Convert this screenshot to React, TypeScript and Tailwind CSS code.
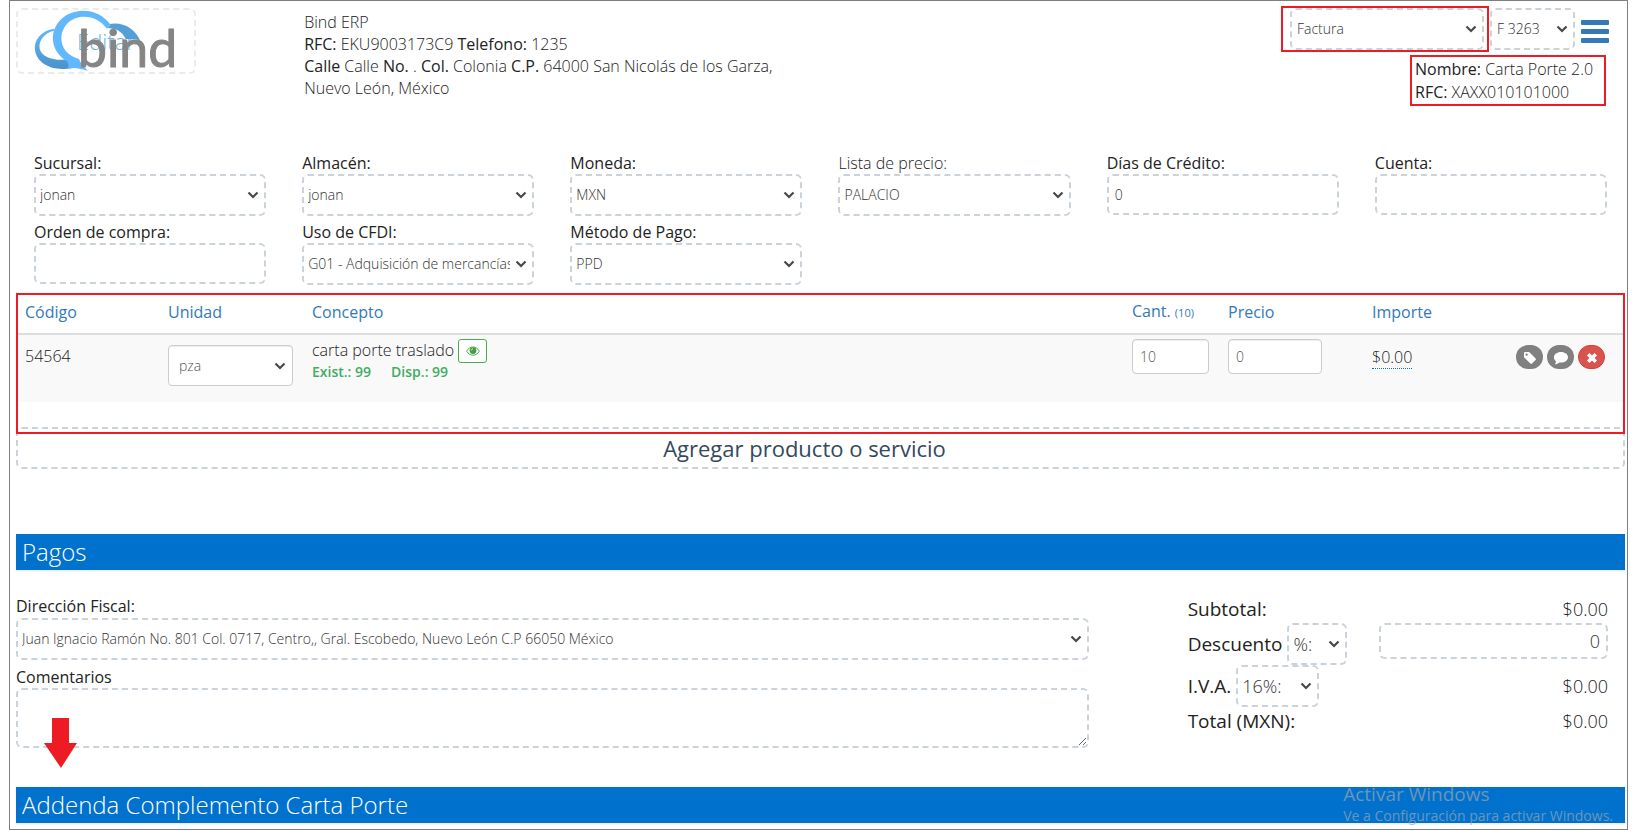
import { useId } from 'react';
import type { ReactNode } from 'react';

const dashed =
  'block rounded-md border-2 border-dashed border-[#cbd3da] bg-transparent font-light text-[#333]';

const boxed =
  'block rounded border border-[#ccc] bg-white font-light text-sm text-[#555] shadow-[inset_0_1px_1px_rgba(0,0,0,0.075)]';

function Select({ id, label, value, className }: { id?: string; label?: string; value: string; className: string }) {
  return (
    <div className="relative">
      <select id={id} aria-label={label} className={`${className} appearance-none overflow-hidden pr-[22px]`}>
        <option>{value}</option>
      </select>
      <svg
        aria-hidden
        viewBox="0 0 12 8"
        className="pointer-events-none absolute inset-y-0 right-[7px] my-auto h-2 w-3"
      >
        <path d="M1.500 1.500L6 6L10.500 1.500" fill="none" stroke="#484848" strokeWidth="2.200" />
      </svg>
    </div>
  );
}

function Field({ label, light, children }: { label: string; light?: boolean; children: (id: string) => ReactNode }) {
  const id = useId();

  return (
    <div className="px-[18px]">
      <label
        htmlFor={id}
        className={light ? 'block leading-[22px] font-light' : 'block leading-[22px]'}
      >
        {label}
      </label>
      {children(id)}
    </div>
  );
}

function SelectField({ label, value, light }: { label: string; value: string; light?: boolean }) {
  return (
    <Field label={label} light={light}>
      {(id) => <Select id={id} value={value} className={`${dashed} h-[42px] w-full pl-1 text-sm`} />}
    </Field>
  );
}

function InputField({ label, value = '' }: { label: string; value?: string }) {
  return (
    <Field label={label}>
      {(id) => (
        <input id={id} type="text" defaultValue={value} className={`${dashed} h-[41px] w-full px-1.5 text-sm`} />
      )}
    </Field>
  );
}

function Logo() {
  return (
    <button
      type="button"
      className="relative flex h-[66px] w-[180px] items-center justify-center rounded-md border-2 border-dashed border-[#e8ecef]"
    >
      <span className="text-[22px] leading-8 font-light text-[#6db3dc]">Editar</span>
      <svg aria-hidden viewBox="45 24 540 198" className="absolute -top-0.5 -left-0.5 h-[66px] w-[180px]">
        <defs>
          <linearGradient id="cloud" x1="0" y1="0" x2="0" y2="1">
            <stop offset="0" stopColor="#62b8fc" />
            <stop offset="1" stopColor="#4a92cb" />
          </linearGradient>
        </defs>
        <path
          d="M160 86C118 92 98 122 102 150C108 190 150 211 198 206L224 203L200 178C160 183 122 172 116 146C112 122 130 98 160 92Z"
          fill="url(#cloud)"
        />
        <path
          d="M318 74C360 62 400 82 417 121C400 116 386 116 374 118C366 98 350 86 322 84Z"
          fill="#559fd8"
        />
        <path
          d="M330 76C306 42 272 30 236 33C184 38 152 80 156 122C159 148 172 166 198 184C204 194 204 202 198 206C220 201 240 206 261 213C250 200 238 190 234 177C200 168 180 144 181 112C184 76 212 50 248 50C278 50 302 64 318 86Z"
          fill="#62b8fc"
        />
        <text
          x="231"
          y="202"
          fontSize="155"
          stroke="#858585"
          strokeWidth="3"
          strokeLinejoin="round"
          className="fill-[#858585] font-[Lato]"
        >
          bind
        </text>
      </svg>
    </button>
  );
}

function EyeIcon() {
  return (
    <svg aria-hidden viewBox="0 0 14 10" className="h-[10px] w-[14px]">
      <path d="M.6 5.200C2.200 2.400 4.400 1 7 1s4.800 1.400 6.400 4.200C11.800 7.800 9.600 9.200 7 9.200S2.200 7.800.6 5.200Z" fill="none" stroke="#4cae4c" />
      <circle cx="7" cy="4.600" r="3.400" fill="#449d44" />
      <path d="M5.200 4.400A2 2 0 0 1 7 2.800" fill="none" stroke="#fff" strokeWidth=".8" />
    </svg>
  );
}

function TagIcon() {
  return (
    <svg aria-hidden viewBox="0 0 14 14" className="mt-0.5 h-[14px] w-[14px]">
      <path
        fillRule="evenodd"
        d="M1 2.200C1 1.500 1.500 1 2.200 1H6.200L12.600 7.400C13.100 7.900 13.100 8.500 12.600 9L9 12.600C8.500 13.100 7.900 13.100 7.400 12.600L1 6.200ZM3.600 2.400A1.200 1.200 0 1 0 3.600 4.800A1.200 1.200 0 1 0 3.600 2.400Z"
        fill="#fff"
      />
    </svg>
  );
}

function CommentIcon() {
  return (
    <svg aria-hidden viewBox="0 0 16 14" className="mt-0.5 h-[14px] w-[16px]">
      <path
        d="M8 1C12 1 15 3.400 15 6.300S12 11.600 8 11.600L6.400 11.500C5 12.700 3.400 13.200 1.800 13.300C2.600 12.500 3 11.500 3 10.500C1.700 9.500 1 8 1 6.300C1 3.400 4 1 8 1Z"
        fill="#fff"
      />
    </svg>
  );
}

function RemoveIcon() {
  return (
    <svg aria-hidden viewBox="0 0 12 12" className="mt-0.5 h-[12px] w-[12px]">
      <path d="M2.200 2.200L9.800 9.800M9.800 2.200L2.200 9.800" stroke="#fff" strokeWidth="3.600" />
    </svg>
  );
}

function ItemsTable() {
  return (
    <div className="relative z-10 border-2 border-[#ed1c24] pb-[30px]">
      <table className="w-full table-fixed text-left">
        <colgroup>
          <col className="w-[143px]" />
          <col className="w-[144px]" />
          <col />
          <col className="w-[96px]" />
          <col className="w-[144px]" />
          <col className="w-[144px]" />
          <col className="w-[114px]" />
        </colgroup>
        <thead>
          <tr className="border-b-2 border-[#ddd] leading-[22px] text-[#337ab7]">
            <th className="px-[7px] pt-[5px] pb-[9px] font-normal">Código</th>
            <th className="px-[7px] pt-[5px] pb-[9px] font-normal">Unidad</th>
            <th className="px-[7px] pt-[5px] pb-[9px] font-normal">Concepto</th>
            <th className="px-[7px] pt-[5px] pb-[9px] font-normal whitespace-nowrap">
              Cant. <span className="text-[11px]">(10)</span>
            </th>
            <th className="px-[7px] pt-[5px] pb-[9px] font-normal">Precio</th>
            <th className="px-[7px] pt-[5px] pb-[9px] font-normal">Importe</th>
            <th aria-label="Acciones" />
          </tr>
        </thead>
        <tbody>
          <tr className="h-[68px] bg-[#f9f9f9] align-top font-light">
            <td className="px-[7px] pt-[10px] leading-[22px]">54564</td>
            <td className="pt-[10px] pr-3 pl-[7px]">
              <Select label="Unidad" value="pza" className={`${boxed} h-[41px] w-full pl-[10px]`} />
            </td>
            <td className="px-[7px] pt-1">
              <div className="flex h-[23px] gap-1 leading-[22px]">
                carta porte traslado
                <button
                  type="button"
                  aria-label="Ver producto"
                  className="flex h-6 w-[29px] items-center justify-center rounded-[3px] border border-[#4cae4c] bg-white"
                >
                  <EyeIcon />
                </button>
              </div>
              <div className="flex gap-5 text-sm font-semibold text-[#41ad62]">
                <span>Exist.: 99</span>
                <span>Disp.: 99</span>
              </div>
            </td>
            <td className="px-[7px] pt-1">
              <input aria-label="Cantidad" type="text" defaultValue="10" className={`${boxed} h-[35px] w-[77px] px-[7px]`} />
            </td>
            <td className="px-[7px] pt-1">
              <input aria-label="Precio" type="text" defaultValue="0" className={`${boxed} h-[35px] w-[94px] px-[7px]`} />
            </td>
            <td className="px-[7px] pt-[10px]">
              <a href="#importe" className="inline-block border-b border-dotted border-b-[#0070cd] leading-[22px]">
                $0.00
              </a>
            </td>
            <td className="px-[7px] pt-[10px]">
              <div className="flex gap-1">
                <button type="button" aria-label="Etiqueta" className="flex h-6 w-[27px] items-center justify-center rounded-full bg-[#808080]">
                  <TagIcon />
                </button>
                <button type="button" aria-label="Comentario" className="flex h-6 w-[27px] items-center justify-center rounded-full bg-[#808080]">
                  <CommentIcon />
                </button>
                <button type="button" aria-label="Eliminar" className="flex h-6 w-[27px] items-center justify-center rounded-full border border-[#d43f3a] bg-[#d9534f]">
                  <RemoveIcon />
                </button>
              </div>
            </td>
          </tr>
        </tbody>
      </table>
    </div>
  );
}

function SectionBar({ children }: { children: ReactNode }) {
  return (
    <h2 className="h-9 bg-[#0072ce] px-1.5 text-2xl leading-9 font-light text-white shadow-[0_1px_2px_rgba(0,0,0,0.1)]">
      {children}
    </h2>
  );
}

function Totals() {
  return (
    <div className="flex-1 pr-[17px] pl-[99px] text-[19px]">
      <div className="flex h-7 items-center justify-between">
        <span>Subtotal:</span>
        <span className="text-lg font-light">$0.00</span>
      </div>
      <div className="flex h-[42px] justify-between">
        <div className="flex items-center gap-[5px]">
          <label htmlFor="descuento">Descuento</label>
          <Select label="Tipo de descuento" value="%:" className={`${dashed} h-[42px] w-[60px] pl-1 text-lg`} />
        </div>
        <input
          id="descuento"
          type="text"
          defaultValue="0"
          className={`${dashed} h-9 w-[229px] px-1.5 text-right text-lg`}
        />
      </div>
      <div className="flex h-[42px] items-center justify-between">
        <div className="flex items-center gap-[5px]">
          <label htmlFor="iva">I.V.A.</label>
          <Select id="iva" value="16%:" className={`${dashed} h-[42px] w-[83px] pl-1 text-lg`} />
        </div>
        <span className="text-lg font-light">$0.00</span>
      </div>
      <div className="flex h-7 items-center justify-between">
        <span>Total (MXN):</span>
        <span className="text-lg font-light">$0.00</span>
      </div>
    </div>
  );
}

export default function App() {
  return (
    <div className="bg-white pr-2 pl-[9px] font-['Open_Sans',sans-serif] text-base text-[#222]">
      <main className="relative border border-[#7f7f7f] pr-0.5 pb-1.5 pl-1.5">
        <header className="grid grid-cols-6">
          <div className="pt-[7px]">
            <Logo />
          </div>
          <div className="col-span-2 pt-[10px] pr-10 pl-5 leading-[22px] font-light">
            <p>Bind ERP</p>
            <p>
              <b className="font-normal">RFC:</b> EKU9003173C9 <b className="font-normal">Telefono:</b> 1235
            </p>
            <p>
              <b className="font-normal">Calle</b> Calle <b className="font-normal">No.</b> .{' '}
              <b className="font-normal">Col.</b> Colonia <b className="font-normal">C.P.</b> 64000 San Nicolás de los
              Garza, Nuevo León, México
            </p>
          </div>
          <div className="col-span-3 flex flex-col items-end pt-[5px] pr-4">
            <div className="flex items-center">
              <div className="border-2 border-[#ed1c24] pr-[3px] pl-[7px]">
                <Select
                  label="Tipo de documento"
                  value="Factura"
                  className={`${dashed} h-[42px] w-[194px] pl-[5px] text-sm`}
                />
              </div>
              <div className="ml-px">
                <Select label="Folio" value="F 3263" className={`${dashed} h-[42px] w-[85px] pl-[5px] text-sm`} />
              </div>
              <button type="button" aria-label="Menú" className="mt-1 ml-1.5 flex w-7 flex-col gap-1">
                <span className="h-[5px] w-full rounded-[1px] bg-[#337ab7]" />
                <span className="h-[5px] w-full rounded-[1px] bg-[#337ab7]" />
                <span className="h-[5px] w-full rounded-[1px] bg-[#337ab7]" />
              </button>
            </div>
            <div className="mt-[3px] mr-[3px] w-[196px] border-2 border-[#ed1c24] px-[3px] pt-px leading-[23px] font-light">
              <p>
                <b className="font-normal">Nombre:</b> Carta Porte 2.0
              </p>
              <p>
                <b className="font-normal">RFC:</b> XAXX010101000
              </p>
            </div>
          </div>
        </header>

        <form className="mt-[46px] grid grid-cols-6 gap-y-[5px]">
          <SelectField label="Sucursal:" value="jonan" />
          <SelectField label="Almacén:" value="jonan" />
          <SelectField label="Moneda:" value="MXN" />
          <SelectField label="Lista de precio:" value="PALACIO" light />
          <InputField label="Días de Crédito:" value="0" />
          <InputField label="Cuenta:" />
          <InputField label="Orden de compra:" />
          <SelectField label="Uso de CFDI:" value="G01 - Adquisición de mercancías" />
          <SelectField label="Método de Pago:" value="PPD" />
        </form>

        <div className="mt-2">
          <ItemsTable />
          <button
            type="button"
            className="-mt-[7px] block h-[42px] w-full rounded-md border-2 border-dashed border-[#cbd3da] pr-8 text-[22px] leading-[38px] text-[#34495e]"
          >
            Agregar producto o servicio
          </button>
        </div>

        <section className="mt-[65px]">
          <SectionBar>Pagos</SectionBar>
          <div className="flex pt-[25px]">
            <div className="w-2/3">
              <label htmlFor="direccion" className="block leading-[23px]">
                Dirección Fiscal:
              </label>
              <Select
                id="direccion"
                value="Juan Ignacio Ramón No. 801 Col. 0717, Centro,, Gral. Escobedo, Nuevo León C.P 66050 México"
                className={`${dashed} h-[42px] w-full pl-1 text-sm`}
              />
              <label htmlFor="comentarios" className="mt-1.5 block leading-[22px]">
                Comentarios
              </label>
              <div className="relative">
                <textarea id="comentarios" className={`${dashed} h-[60px] w-full resize px-1.5 text-sm`} />
                <svg aria-hidden viewBox="0 0 34 50" className="absolute top-[30px] left-7 h-[50px] w-[34px]">
                  <path d="M8 0H25V25H33L17 50L0 25H8Z" fill="#ed1c24" />
                </svg>
              </div>
            </div>
            <Totals />
          </div>
        </section>

        <section className="mt-[39px]">
          <SectionBar>Addenda Complemento Carta Porte</SectionBar>
        </section>

        <aside className="pointer-events-none absolute right-[14px] bottom-[3px] text-[#a0a5aa]/70">
          <p className="text-[19px] leading-6">Activar Windows</p>
          <p className="text-sm leading-5">Ve a Configuración para activar Windows.</p>
        </aside>
      </main>
    </div>
  );
}
